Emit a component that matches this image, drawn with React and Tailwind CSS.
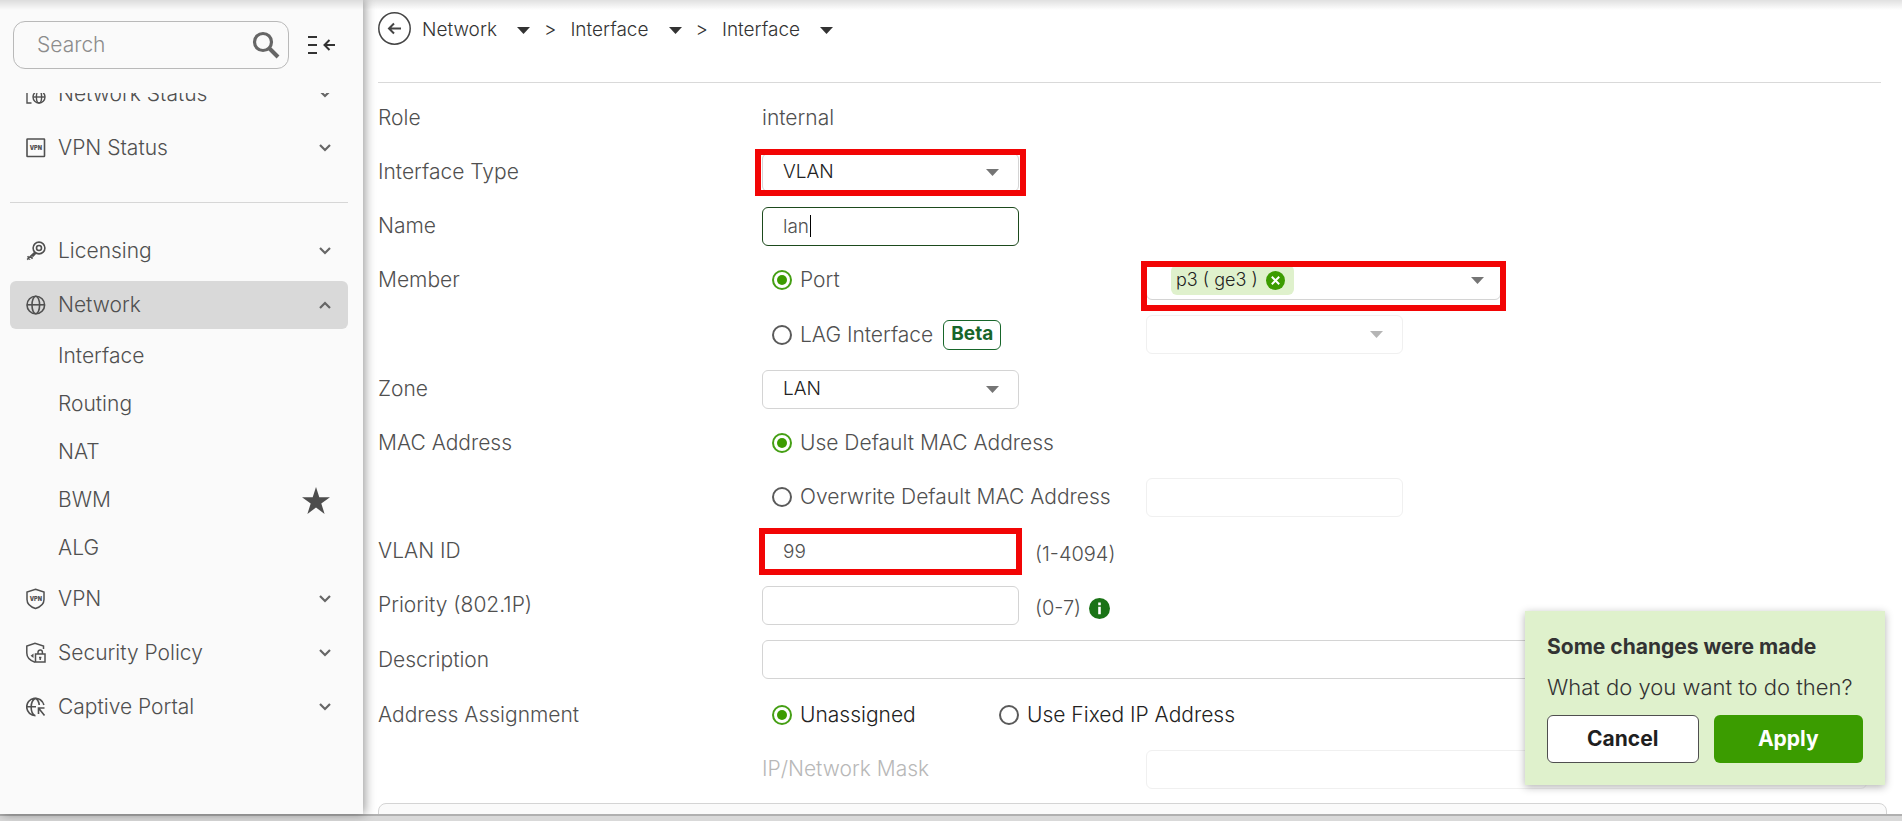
import React, { useState } from 'react';

const NetworkStatusIcon = () => (
  <svg width="20" height="20" viewBox="0 0 20 20" fill="none" stroke="currentColor" strokeWidth="1.4">
    <path d="M19 5V1H1v18h4.5" />
    <circle cx="13" cy="13" r="6" />
    <ellipse cx="13" cy="13" rx="2.6" ry="6" />
    <path d="M7 13h12" />
  </svg>
);

const VpnStatusIcon = () => (
  <svg width="20" height="20" viewBox="0 0 20 20" fill="none">
    <rect x="1" y="1" width="17.5" height="17.5" rx="0.5" stroke="currentColor" strokeWidth="1.6" />
    <text x="9.8" y="11.8" fontSize="5.5" fontWeight="900" textAnchor="middle" fill="currentColor">VPN</text>
  </svg>
);

const KeyIcon = () => (
  <svg width="20" height="20" viewBox="0 0 20 20" fill="none" stroke="currentColor" strokeWidth="1.6">
    <circle cx="13" cy="7" r="5.9" />
    <circle cx="13" cy="7" r="2.5" />
    <path d="M8.8 11.2 1.2 18.6M4.4 15.4l2.2 2.2M1.6 15.2l2.6 3.2M10 12l-3.6 3.6" />
  </svg>
);

const GlobeIcon = () => (
  <svg width="20" height="20" viewBox="0 0 20 20" fill="none" stroke="currentColor" strokeWidth="1.6">
    <circle cx="9.8" cy="10" r="8.8" />
    <ellipse cx="9.8" cy="10" rx="3.8" ry="8.8" />
    <path d="M1 9.8h17.6" />
  </svg>
);

const VpnShieldIcon = () => (
  <svg width="20" height="22" viewBox="0 0 20 22" fill="none">
    <path d="M9.5 1.2 18 4v7.5c0 4.5-4 7.6-8.5 9-4.5-1.4-8.5-4.5-8.5-9V4z" stroke="currentColor" strokeWidth="1.5" />
    <text x="9.8" y="12.6" fontSize="5.5" fontWeight="900" textAnchor="middle" fill="currentColor">VPN</text>
  </svg>
);

const ShieldLockIcon = () => (
  <svg width="20" height="22" viewBox="0 0 20 22" fill="none" stroke="currentColor" strokeWidth="1.5">
    <path d="M17.5 7V4L9 1.2.8 4v7c0 4.5 3.4 7.6 8.2 9.2" />
    <rect x="9.5" y="12" width="9.5" height="8" />
    <path d="M12 12v-1.8a2.2 2.2 0 0 1 4.4 0V12M14.2 15v3M13 15.5h2.4" />
    <path d="M7.5 11.5V16l-2.9-2.2z" fill="currentColor" stroke="none" />
  </svg>
);

const CaptiveIcon = () => (
  <svg width="20" height="20" viewBox="0 0 20 20" fill="none" stroke="currentColor" strokeWidth="1.6">
    <path d="M9.5 18.6A8.7 8.7 0 1 1 17.9 8M9.5 1.2C3.8 4 3.8 16 9 18.6M9.500 1.2c2.3 1.4 3.5 4 3.7 6.800M1 9.8h9" />
    <path d="M18.5 11h-6v6M12.5 11l6 7.5" />
  </svg>
);

const Chevron = ({ up }) => (
  <svg width="12" height="8" viewBox="0 0 12 8" fill="none" stroke="#666" strokeWidth="2.2">
    <path d={up ? 'M1 7l5-5 5 5' : 'M1 1l5 5 5-5'} />
  </svg>
);

const Caret = ({ className }) => (
  <svg width="13" height="7" viewBox="0 0 13 7" fill="currentColor" className={className}>
    <path d="M0 0h13L6.5 7z" />
  </svg>
);

const topMenu = [
  { label: 'Network Status', icon: NetworkStatusIcon },
  { label: 'VPN Status', icon: VpnStatusIcon },
];

const mainMenu = [
  { label: 'Licensing', icon: KeyIcon },
  { label: 'Network', icon: GlobeIcon, children: ['Interface', 'Routing', 'NAT', 'BWM', 'ALG'] },
  { label: 'VPN', icon: VpnShieldIcon },
  { label: 'Security Policy', icon: ShieldLockIcon },
  { label: 'Captive Portal', icon: CaptiveIcon },
];

const MenuItem = ({ item, open, onClick }) => {
  const Icon = item.icon;
  return (
    <button
      onClick={onClick}
      className={`flex h-12 w-full shrink-0 items-center rounded-md pl-4 pr-[17px] ${open ? 'bg-[#d9d9d9]' : ''}`}
    >
      <span className="flex w-8 shrink-0 items-center"><Icon /></span>
      <span className="flex-1 text-left">{item.label}</span>
      <Chevron up={open} />
    </button>
  );
};

const Sidebar = () => {
  const [open, setOpen] = useState('Network');

  return (
    <aside className="z-10 flex w-[363px] shrink-0 flex-col bg-[#fafafa] text-[#505050] shadow-[2px_0_10px_rgba(0,0,0,0.4)]">
      <div className="flex h-[93px] shrink-0 items-start pl-[13px] pt-[21px]">
        <label className="flex h-12 w-[276px] items-center rounded-xl border border-[#b9b9b9] pl-[23px] pr-2">
          <input
            aria-label="Search"
            placeholder="Search"
            className="min-w-0 flex-1 bg-transparent outline-none placeholder:text-[#8c8c8c]"
          />
          <svg width="28" height="28" viewBox="0 0 28 28" fill="none" stroke="#666">
            <circle cx="11" cy="11" r="8.5" strokeWidth="3.2" />
            <path d="M17 17l9 9" strokeWidth="4" />
          </svg>
        </label>
        <button aria-label="Collapse menu" className="ml-[18px] mt-[14px]">
          <svg width="30" height="20" viewBox="0 0 30 20" fill="none" stroke="#333" strokeWidth="2">
            <path d="M1 2h9M1 10h9M1 18h9" />
            <path d="M28 10H18M22.5 5l-5 5 5 5" />
          </svg>
        </button>
      </div>

      <div className="flex-1 overflow-hidden pl-[10px] pr-[15px]">
        {/* the list sits slightly scrolled under the search box */}
        <nav className="-mt-[23px]">
          <div className="flex flex-col gap-[6px]">
            {topMenu.map(item => <MenuItem key={item.label} item={item} open={false} />)}
          </div>
          <hr className="mb-6 mt-[30px] border-[#d6d6d6]" />
          <div className="flex flex-col gap-[6px]">
            {mainMenu.map(item => (
              <div key={item.label} className="flex flex-col gap-[3px]">
                <MenuItem
                  item={item}
                  open={open === item.label}
                  onClick={() => setOpen(open === item.label ? '' : item.label)}
                />
                {item.children && open === item.label && (
                  <ul className="-mb-[3px]">
                    {item.children.map(child => (
                      <li key={child} className="flex h-12 items-center justify-between pl-12 pr-[18px]">
                        <a href="#">{child}</a>
                        {child === 'BWM' && (
                          <svg width="28" height="27" viewBox="0 0 28 27" fill="#4d4d4d">
                            <path d="M14 0l3.3 10.2H28l-8.7 6.200L22.6 27 14 20.5 5.4 27l3.3-10.600L0 10.2h10.7z" />
                          </svg>
                        )}
                      </li>
                    ))}
                  </ul>
                )}
              </div>
            ))}
          </div>
        </nav>
      </div>
    </aside>
  );
};

const Crumb = ({ label }) => (
  <button className="flex items-center gap-5">
    <span>{label}</span>
    <Caret />
  </button>
);

const Row = ({ label, htmlFor, tall, children }) => (
  <div className={`grid grid-cols-[384px_384px_1fr] items-center ${tall ? 'h-[55px]' : 'h-[54px]'}`}>
    {htmlFor ? <label htmlFor={htmlFor}>{label}</label> : <span>{label}</span>}
    {children}
  </div>
);

const Select = ({ id, label, value, disabled, marked }) => (
  <div className="relative w-[257px]">
    <select
      id={id}
      aria-label={label}
      disabled={disabled}
      defaultValue={value}
      className="h-[39px] w-full appearance-none rounded-md border border-[#d4d4d4] bg-white pl-5 text-[19px] text-[#222] outline-none disabled:border-[#f0f0f0]"
    >
      <option>{value}</option>
    </select>
    <Caret className={`pointer-events-none absolute right-5 top-4 ${disabled ? 'text-[#b5b5b5]' : 'text-[#757575]'}`} />
    {marked && <div className="pointer-events-none absolute -inset-x-[7px] -inset-y-1 border-6 border-[#f20505]" />}
  </div>
);

const TextBox = ({ className = 'w-[257px] border-[#d4d4d4]', ...props }) => (
  <input
    type="text"
    className={`h-[39px] rounded-md border bg-white pl-5 text-[19px] outline-none ${className}`}
    {...props}
  />
);

const Radio = ({ name, label, defaultChecked }) => (
  <label className="ml-[10px] flex items-center gap-2 whitespace-nowrap">
    <input
      type="radio"
      name={name}
      defaultChecked={defaultChecked}
      className="size-5 shrink-0 appearance-none rounded-full border-2 border-[#5a5a5a] bg-clip-content p-[3px] checked:border-[#459f14] checked:bg-[#3c9c00]"
    />
    <span>{label}</span>
  </label>
);

const ChangesPopup = () => (
  <div className="absolute bottom-9 right-[17px] z-20 w-[360px] bg-[#dff1cc] px-[22px] pb-[22px] pt-[18px] text-[#333] shadow-[0_2px_8px_rgba(0,0,0,0.3)]">
    <h2 className="leading-9 font-bold">Some changes were made</h2>
    <p className="mb-[9px] mt-1 whitespace-nowrap text-[22px] leading-[37px]">What do you want to do then?</p>
    <div className="flex gap-[15px]">
      <button className="h-12 flex-1 rounded-md border border-[#4f4f4f] bg-white font-bold text-[#1f1f1f]">Cancel</button>
      <button className="h-12 flex-1 rounded-md bg-[#3b9c00] font-bold text-white">Apply</button>
    </div>
  </div>
);

const App = () => {
  return (
    <div className="relative flex h-screen flex-col overflow-hidden bg-white font-['Inter',sans-serif] text-[21px] font-light text-[#505050]">
      <div className="flex min-h-0 flex-1">
        <Sidebar />

        <main className="min-w-0 flex-1 overflow-hidden px-[15px]">
          <div className="mr-[6px] h-[83px] border-b border-[#d9d9d9] pt-3 text-[19px] text-[#333]">
            <div className="flex items-center">
              <button aria-label="Back" className="mr-[11px]">
                <svg width="33" height="33" viewBox="0 0 33 33" fill="none" stroke="#444">
                  <circle cx="16.5" cy="16.5" r="15.7" strokeWidth="1.5" />
                  <path d="M23 16.5H11.5M16 11.5l-5 5 5 5" strokeWidth="2" />
                </svg>
              </button>
              <nav className="flex items-center gap-[14px] pt-1">
                <Crumb label="Network" />
                <span>&gt;</span>
                <Crumb label="Interface" />
                <span>&gt;</span>
                <Crumb label="Interface" />
              </nav>
            </div>
          </div>

          <form className="pt-2">
            <Row label="Role"><span>internal</span></Row>
            <Row label="Interface Type" htmlFor="ifType">
              <Select id="ifType" value="VLAN" marked />
            </Row>
            <Row label="Name" htmlFor="ifName">
              <div className="relative flex w-[257px]">
                <TextBox id="ifName" defaultValue="lan" className="w-full border-[#1d4a1d]" />
                {/* text cursor */}
                <span className="absolute left-12 top-2 h-[22px] w-px bg-black" />
              </div>
            </Row>
            <Row label="Member">
              <Radio name="member" label="Port" defaultChecked />
              <div className="relative w-[355px]">
                <div className="flex h-[39px] items-center justify-between rounded-md border border-[#d4d4d4] pl-6 pr-4">
                  <span className="flex h-[30px] items-center gap-2 rounded-md bg-[#dff1cc] pl-[5px] pr-[9px] text-lg text-[#222]">
                    p3 ( ge3 )
                    <button type="button" aria-label="Remove p3">
                      <svg width="19" height="19" viewBox="0 0 19 19">
                        <circle cx="9.5" cy="9.5" r="9.5" fill="#3c9c00" />
                        <path d="M5.8 5.8l7.4 7.4M13.2 5.8l-7.4 7.4" stroke="#fff" strokeWidth="2" />
                      </svg>
                    </button>
                  </span>
                  <button type="button" aria-label="Choose ports"><Caret className="text-[#757575]" /></button>
                </div>
                <div className="pointer-events-none absolute -inset-x-[5px] -bottom-[11px] top-0 border-6 border-[#f20505]" />
              </div>
            </Row>
            <Row label="" tall>
              <div className="flex items-center gap-[10px]">
                <Radio name="member" label="LAG Interface" />
                <span className="flex h-[30px] items-center rounded-md border border-[#17662a] px-[7px] text-[19px] font-bold text-[#17662a]">Beta</span>
              </div>
              <Select label="LAG Interface" value="" disabled />
            </Row>
            <Row label="Zone" htmlFor="zone">
              <Select id="zone" value="LAN" />
            </Row>
            <Row label="MAC Address">
              <Radio name="mac" label="Use Default MAC Address" defaultChecked />
            </Row>
            <Row label="">
              <Radio name="mac" label="Overwrite Default MAC Address" />
              <TextBox aria-label="MAC Address" disabled className="w-[257px] border-[#f0f0f0]" />
            </Row>
            <Row label="VLAN ID" htmlFor="vlanId">
              <div className="flex items-center gap-4">
                <div className="relative flex w-[257px]">
                  <TextBox id="vlanId" defaultValue="99" />
                  <div className="pointer-events-none absolute -inset-x-[3px] -inset-y-1 border-6 border-[#f20505]" />
                </div>
                <span className="pt-[6px] text-xl">(1-4094)</span>
              </div>
            </Row>
            <Row label="Priority (802.1P)" htmlFor="priority">
              <div className="flex items-center gap-4">
                <TextBox id="priority" />
                <span className="flex items-center gap-2 pt-[6px] text-xl">
                  (0-7)
                  <svg width="21" height="21" viewBox="0 0 21 21">
                    <circle cx="10.5" cy="10.5" r="10.5" fill="#1a7316" />
                    <path d="M9.2 4.6h2.6v2.6H9.2zM9.2 8.800h2.6v7.4H9.2z" fill="#fff" />
                  </svg>
                </span>
              </div>
            </Row>
            <Row label="Description" htmlFor="description" tall>
              <TextBox id="description" className="col-span-2 mr-5 border-[#d4d4d4]" />
            </Row>
            <Row label="Address Assignment" tall>
              <div className="col-span-2 flex items-center text-[#222]">
                <div className="w-[227px]"><Radio name="assign" label="Unassigned" defaultChecked /></div>
                <Radio name="assign" label="Use Fixed IP Address" />
              </div>
            </Row>
            <Row label="">
              <label htmlFor="ipMask" className="text-[#b8b8b8]">IP/Network Mask</label>
              <TextBox id="ipMask" disabled className="mr-5 border-[#f0f0f0]" />
            </Row>
          </form>

          <section className="mt-[7px] h-20 rounded-lg border border-[#d4d4d4] bg-[#fafafa]" />
        </main>
      </div>

      <footer className="h-[7px] shrink-0 border-t-2 border-[#b0b0b0] bg-[#d9d9d9]" />
      <ChangesPopup />
      <div className="pointer-events-none absolute inset-x-0 top-0 z-20 h-[10px] bg-linear-to-b from-black/12 to-transparent" />
    </div>
  );
};

export default App;
